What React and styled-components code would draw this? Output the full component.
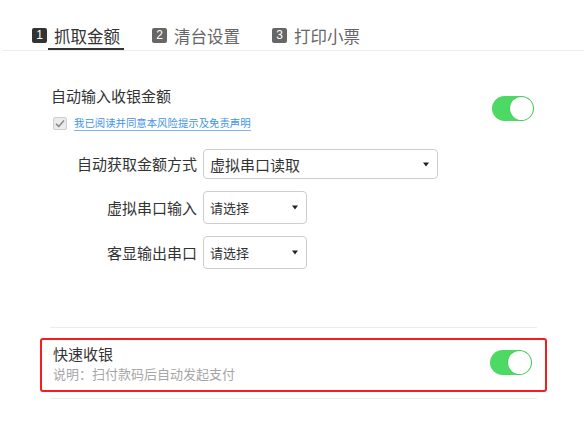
import React from "react";
import styled, { createGlobalStyle } from "styled-components";

const Global = createGlobalStyle`
  html, body { margin: 0; padding: 0; background: #fff; }
  body { font-family: "Noto Sans CJK SC", "Noto Sans", sans-serif; color: #333; }
`;

const Page = styled.div`
  width: 584px;
  height: 421px;
  overflow: hidden;
`;

const TabBar = styled.div`
  display: flex;
  align-items: flex-end;
  gap: 28px;
  height: 50px;
  margin-left: 3px;
  padding-left: 29px;
  border-bottom: 1px solid #ececec;
`;

const Tab = styled.div`
  display: flex;
  align-items: flex-start;
  height: 26px;
`;

const Badge = styled.span`
  width: 15px;
  height: 15px;
  margin-top: 4px;
  border-radius: 2px;
  background: ${(p) => (p.$active ? "#333" : "#666")};
  color: #fff;
  font-family: "Liberation Sans", Arial, sans-serif;
  font-size: 12px;
  line-height: 15px;
  text-align: center;
`;

const TabLabel = styled.span`
  padding: 0 4px 0 6px;
  margin-left: 1px;
  font-size: 16.5px;
  line-height: 24px;
  color: ${(p) => (p.$active ? "#333" : "#666")};
  border-bottom: 2px solid ${(p) => (p.$active ? "#333" : "transparent")};
`;

const Content = styled.div`
  padding: 35px 47px 0 50px;
`;

const SettingRow = styled.div`
  display: flex;
  align-items: center;
  justify-content: space-between;
`;

const TextBlock = styled.div`
  display: flex;
  flex-direction: column;
`;

const Title = styled.div`
  font-size: 15px;
  line-height: 20px;
  color: #333;
  padding-left: 1px;
`;

const AgreeRow = styled.label`
  display: flex;
  align-items: center;
  gap: 7px;
  margin-top: 10px;
  padding-left: 3px;
`;

const CheckBox = styled.span`
  width: 12px;
  height: 11px;
  border: 1px solid #cfcfcf;
  border-radius: 2px;
  background: #ebebeb;
  display: flex;
  align-items: center;
  justify-content: center;
`;

const AgreeLink = styled.a`
  font-size: 10.4px;
  line-height: 14px;
  color: #3f94ea;
  text-decoration: none;
  border-bottom: 1px solid #7ab6f2;
  cursor: pointer;
`;

const Switch = styled.div`
  position: relative;
  width: 42px;
  height: 25px;
  margin-right: 3px;
  margin-bottom: ${(p) => p.$lift || 0}px;
  border-radius: 13px;
  background: #4cd964;
  flex-shrink: 0;
`;

const Knob = styled.span`
  position: absolute;
  top: 1px;
  right: 1px;
  width: 23px;
  height: 23px;
  border-radius: 50%;
  background: #fff;
  box-shadow: 0 0 0 0.5px #3fbf55;
`;

const Form = styled.div`
  display: flex;
  flex-direction: column;
  gap: 12px;
  margin-top: 18px;
`;

const FormRow = styled.div`
  display: grid;
  grid-template-columns: 147px auto;
  column-gap: 6px;
  align-items: center;
`;

const FieldLabel = styled.div`
  text-align: right;
  font-size: 15px;
  line-height: 20px;
  color: #333;
`;

const Select = styled.div`
  box-sizing: border-box;
  display: flex;
  align-items: center;
  justify-content: space-between;
  width: ${(p) => p.$w}px;
  height: ${(p) => p.$h}px;
  padding: 0 6px 0 6px;
  border: 1px solid #cdcdcd;
  border-radius: 4px;
  background: #fff;
  font-size: ${(p) => p.$fs}px;
  color: #333;
`;

const Caret = () => (
  <svg width="6" height="5" viewBox="0 0 6 5" style={{ marginRight: 2 }}>
    <path d="M0 0.5 L6 0.5 L3 4.5 Z" fill="#222" />
  </svg>
);

const Section = styled.div`
  margin-top: 58px;
  border-top: 1px solid #ececec;
  border-bottom: 1px solid #ececec;
  padding: 10px 0 6px;
`;

const Highlight = styled.div`
  margin: 0 -10px;
  padding: 4px 10px 7px;
  border: 2px solid #f51d1d;
  border-radius: 3px;
`;

const Desc = styled.div`
  font-size: 13px;
  line-height: 19px;
  color: #a6a6a6;
  padding-left: 1px;
`;

export default function App() {
  return (
    <Page>
      <Global />
      <TabBar>
        <Tab>
          <Badge $active>1</Badge>
          <TabLabel $active>抓取金额</TabLabel>
        </Tab>
        <Tab>
          <Badge>2</Badge>
          <TabLabel>清台设置</TabLabel>
        </Tab>
        <Tab>
          <Badge>3</Badge>
          <TabLabel>打印小票</TabLabel>
        </Tab>
      </TabBar>
      <Content>
        <SettingRow>
          <TextBlock>
            <Title>自动输入收银金额</Title>
            <AgreeRow>
              <CheckBox>
                <svg width="10" height="9" viewBox="0 0 10 9">
                  <path d="M1 4.8 L3.8 7.4 L9 1.4" fill="none" stroke="#8a8a8a" strokeWidth="1.6" />
                </svg>
              </CheckBox>
              <AgreeLink>我已阅读并同意本风险提示及免责声明</AgreeLink>
            </AgreeRow>
          </TextBlock>
          <Switch>
            <Knob />
          </Switch>
        </SettingRow>
        <Form>
          <FormRow>
            <FieldLabel>自动获取金额方式</FieldLabel>
            <Select $w={235} $h={30} $fs={15}>
              <span>虚拟串口读取</span>
              <Caret />
            </Select>
          </FormRow>
          <FormRow>
            <FieldLabel>虚拟串口输入</FieldLabel>
            <Select $w={104} $h={33} $fs={13}>
              <span>请选择</span>
              <Caret />
            </Select>
          </FormRow>
          <FormRow>
            <FieldLabel>客显输出串口</FieldLabel>
            <Select $w={104} $h={33} $fs={13}>
              <span>请选择</span>
              <Caret />
            </Select>
          </FormRow>
        </Form>
        <Section>
          <Highlight>
            <SettingRow>
              <TextBlock>
                <Title>快速收银</Title>
                <Desc>说明：扫付款码后自动发起支付</Desc>
              </TextBlock>
              <Switch $lift={3}>
                <Knob />
              </Switch>
            </SettingRow>
          </Highlight>
        </Section>
      </Content>
    </Page>
  );
}
